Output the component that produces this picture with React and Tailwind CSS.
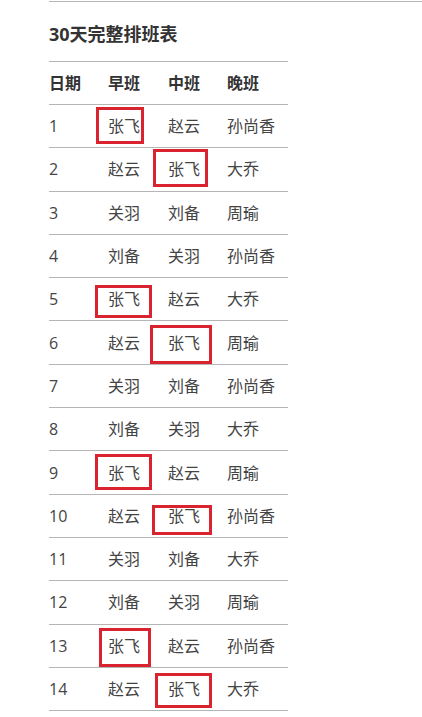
import React from 'react';

const rows = [
  ['1', '张飞', '赵云', '孙尚香'],
  ['2', '赵云', '张飞', '大乔'],
  ['3', '关羽', '刘备', '周瑜'],
  ['4', '刘备', '关羽', '孙尚香'],
  ['5', '张飞', '赵云', '大乔'],
  ['6', '赵云', '张飞', '周瑜'],
  ['7', '关羽', '刘备', '孙尚香'],
  ['8', '刘备', '关羽', '大乔'],
  ['9', '张飞', '赵云', '周瑜'],
  ['10', '赵云', '张飞', '孙尚香'],
  ['11', '关羽', '刘备', '大乔'],
  ['12', '刘备', '关羽', '周瑜'],
  ['13', '张飞', '赵云', '孙尚香'],
  ['14', '赵云', '张飞', '大乔'],
];

// hand-drawn red marks, page coords minus table origin (49, 61)
const marks = [
  { x: 47, y: 45, w: 48, h: 37 },
  { x: 104, y: 87, w: 55, h: 38 },
  { x: 46, y: 223, w: 57, h: 33 },
  { x: 101, y: 263, w: 62, h: 39 },
  { x: 46, y: 392, w: 57, h: 36 },
  { x: 103, y: 443, w: 60, h: 30 },
  { x: 50, y: 566, w: 52, h: 39 },
  { x: 106, y: 611, w: 57, h: 35 },
];

const font = { fontFamily: '"Open Sans", "Noto Sans CJK SC", sans-serif' };

export default function App() {
  return (
    <div className="w-[422px] h-[717px] bg-white overflow-hidden" style={font}>
      <div className="pl-[49px] pt-[1px]">
        <div className="border-t border-[#b5b5b5]" />
        <h2 className="mt-[19px] h-[26px] text-[18px] leading-[26px] font-bold text-[#333]">30天完整排班表</h2>
        <div className="relative mt-[14px] w-[239px] border-t border-[#b5b5b5]">
          <div className="grid grid-cols-[59px_60px_59px_61px] h-[43px] items-center border-b border-[#b5b5b5] text-[16px] font-bold text-[#333]">
            <span>日期</span>
            <span>早班</span>
            <span>中班</span>
            <span>晚班</span>
          </div>
          {rows.map((r, i) => (
            <div key={i} className="grid grid-cols-[59px_60px_59px_61px] h-[43.3px] items-center border-b border-[#b5b5b5] text-[16px] text-[#444]">
              {r.map((c, j) => (
                <span key={j}>{c}</span>
              ))}
            </div>
          ))}
          {marks.map((m, i) => (
            <div
              key={i}
              className="absolute border-[3px] border-[#d9232e]"
              style={{ left: m.x, top: m.y, width: m.w, height: m.h }}
            />
          ))}
        </div>
      </div>
    </div>
  );
}
